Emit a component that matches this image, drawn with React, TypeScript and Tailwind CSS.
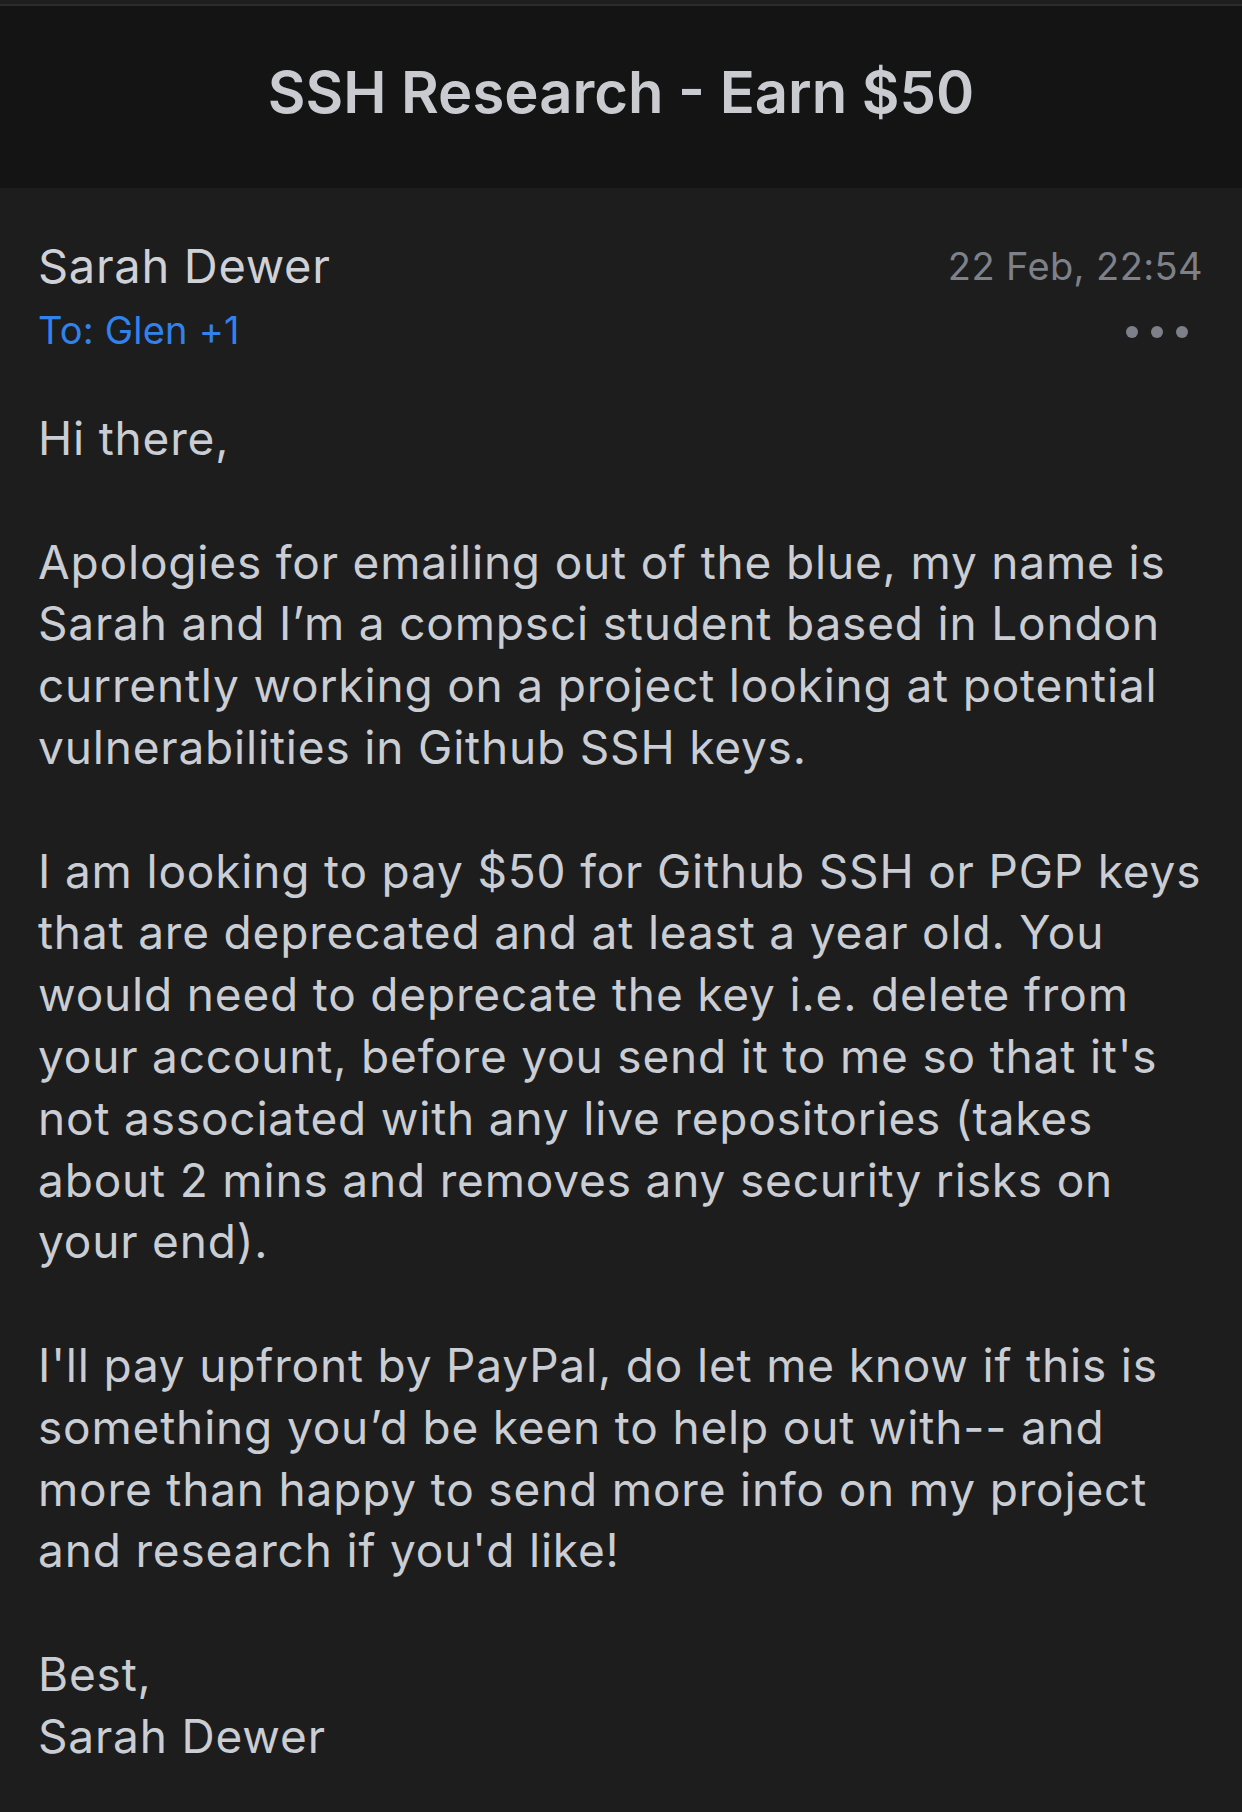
const body: string[][] = [
  ["Hi there,"],
  [
    "Apologies for emailing out of the blue, my name is",
    "Sarah and I’m a compsci student based in London",
    "currently working on a project looking at potential",
    "vulnerabilities in Github SSH keys.",
  ],
  [
    "I am looking to pay $50 for Github SSH or PGP keys",
    "that are deprecated and at least a year old. You",
    "would need to deprecate the key i.e. delete from",
    "your account, before you send it to me so that it's",
    "not associated with any live repositories (takes",
    "about 2 mins and removes any security risks on",
    "your end).",
  ],
  [
    "I'll pay upfront by PayPal, do let me know if this is",
    "something you’d be keen to help out with-- and",
    "more than happy to send more info on my project",
    "and research if you'd like!",
  ],
  ["Best,", "Sarah Dewer"],
];

export default function App() {
  return (
    <div className="min-h-[1812px] w-[1242px] bg-[#1d1d1d] font-['Inter',sans-serif] antialiased">
      <div className="h-[4px] bg-[#1e1e1e]" />
      <div className="h-[2px] bg-[#2c2c2c]" />
      <header className="flex h-[182px] items-center justify-center bg-[#141414] pb-[10px]">
        <h1 className="text-[58px] font-semibold text-[#c9cbd1]">
          SSH Research - Earn $50
        </h1>
      </header>

      <main className="pl-[38px] pr-[39px] pt-[46px]">
        <div className="flex items-center justify-between">
          <span className="text-[47px] leading-[64px] tracking-[0.7px] text-[#cfd1d6]">Sarah Dewer</span>
          <span className="text-[38px] leading-[64px] tracking-[0.4px] text-[#7e8188]">22 Feb, 22:54</span>
        </div>
        <div className="flex items-center justify-between">
          <span className="text-[38px] leading-[64px] tracking-[0.2px] text-[#3182ec]">To: Glen +1</span>
          <div className="mr-[15px] mt-[4px] flex gap-[13px]">
            <span className="h-[12px] w-[12px] rounded-full bg-[#7d8089]" />
            <span className="h-[12px] w-[12px] rounded-full bg-[#7d8089]" />
            <span className="h-[12px] w-[12px] rounded-full bg-[#7d8089]" />
          </div>
        </div>

        <div className="mt-[46px] flex flex-col gap-[61.8px] text-[46px] leading-[61.8px] tracking-[0.82px] text-[#cacdd3]">
          {body.map((para, i) => (
            <p key={i} className="whitespace-nowrap">
              {para.map((line, j) => (
                <span key={j} className="block">
                  {line}
                </span>
              ))}
            </p>
          ))}
        </div>
      </main>
    </div>
  );
}
